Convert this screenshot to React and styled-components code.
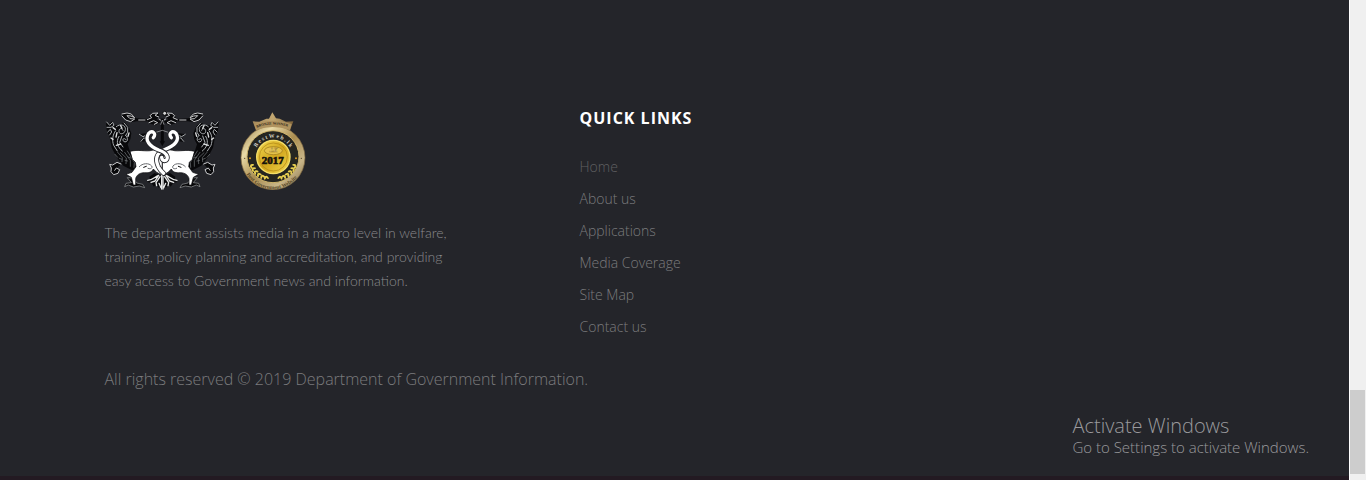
import React from "react";
import styled, { createGlobalStyle } from "styled-components";

const GlobalStyle = createGlobalStyle`
  *, *::before, *::after { box-sizing: border-box; }
  body { margin: 0; background: #24252a; font-family: "Open Sans", sans-serif; }
`;

const Page = styled.div`
  display: flex;
  min-height: 100vh;
`;

const Footer = styled.footer`
  flex: 1;
  position: relative;
  display: flex;
  flex-direction: column;
  padding-top: 106px;
  background: #24252a;
  border-bottom: 4px solid #231a22;
`;

const Container = styled.div`
  width: 100%;
  max-width: 1140px;
  margin: 0 auto;
`;

const Columns = styled.div`
  display: grid;
  grid-template-columns: 5fr 7fr;
`;

const Logos = styled.div`
  display: flex;
  align-items: flex-end;
  gap: 21px;
  padding-top: 4px;
  margin-bottom: 31px;
`;

const Drawing = styled.svg`
  display: block;
  flex: none;
`;

const About = styled.p`
  max-width: 350px;
  margin: 0;
  font: 300 14px/24px Lato, sans-serif;
  color: #8a8a8c;
`;

const Heading = styled.h4`
  margin: 0 0 21px;
  font-size: 16px;
  line-height: 24px;
  font-weight: 700;
  letter-spacing: 1px;
  color: #fff;
`;

const LinkList = styled.ul`
  list-style: none;
  margin: 0;
  padding: 0;
`;

const FooterLink = styled.a`
  display: inline-block;
  font-size: 14px;
  line-height: 32px;
  font-weight: 300;
  vertical-align: top;
  color: ${(p) => (p.$dim ? "#606062" : "#7b7b7d")};
  text-decoration: none;
`;

const LinkItem = styled.li`
  height: 32px;
`;

const Copyright = styled.p`
  margin: 24px 0 0;
  font-size: 16px;
  line-height: 24px;
  font-weight: 300;
  color: #7b7b7d;
`;

const Watermark = styled.aside`
  position: absolute;
  right: 40px;
  bottom: 19px;
  font-weight: 300;
  color: #9a9a9d;
`;

const WatermarkTitle = styled.div`
  font-size: 20px;
  line-height: 22px;
`;

const WatermarkText = styled.div`
  font-size: 15px;
  line-height: 20px;
`;

const ScrollTrack = styled.div`
  display: flex;
  flex-direction: column;
  justify-content: flex-end;
  width: 17px;
  padding: 0 1px 6px 0;
  background: #f0f0f0;
  border-left: 1px solid #fff;
`;

const ScrollThumb = styled.div`
  height: 84px;
  background: #cdcdcd;
`;

function WingAndBeast() {
  return (
    <g strokeLinecap="round" strokeLinejoin="round">
      <path d="M80 43 L96 38 L113 41 L124 55 L160 57 L171 40 L190 38 L195 48 L185 58 L199 65 L183 76 L163 70 L160 64 L126 64 L108 67 L93 61 Z" fill="#08080a" />
      <g fill="none" stroke="#c9cacc" strokeWidth="3">
        <path d="M82 42 L97 39 L110 42 L120 53 L109 48 L97 47 L106 56 L120 57 L108 65 L93 60 L82 48" />
        <path d="M132 60 H151 M158 59 L171 53 L166 47 L174 40 L190 39 L181 46 L192 51 M163 68 L177 62 L189 68 L179 73 M193 57 L202 63" />
      </g>
      <path d="M34 65 L43 72 L52 64 L60 76 L77 75 L88 65 L102 80 L110 100 L107 118 L99 133 L107 158 L127 190 L125 209 L111 210 L86 197 L66 172 L51 143 L45 111 L37 95 L35 82 Z" fill="#08080a" />
      <g fill="none" stroke="#aaaeb1" strokeWidth="3">
        <path d="M36 66 L45 76 L54 67 L58 76 L49 82 L37 82 M39 96 L47 88 L51 96 L45 105" />
        <path d="M65 80 C77 69 94 76 92 89 C91 103 74 105 73 95 C72 85 82 82 85 91 M88 69 L99 82 L99 97 L93 106" />
        <path d="M63 92 C53 105 52 122 57 136 L68 153 M73 109 C62 126 70 143 83 153 M82 108 L75 127 L85 141 M93 106 C105 119 95 130 87 124 C81 117 89 112 94 119" />
        <path d="M55 83 L62 88 M67 98 L64 111 M78 77 L82 85 M103 99 L100 109 M49 114 L55 118 M65 136 L78 132" strokeWidth="4" stroke="#dcdedf" />
        <path d="M61 163 L69 172 M69 157 L83 173 L82 185 M78 158 L95 174 L94 191 M90 157 L107 181 L107 199 M98 153 L119 187 L118 202 M74 175 L82 178 M91 181 L99 183 M100 171 L108 174" stroke="#777b7f" strokeWidth="2" />
      </g>
      <path d="M79 192 L67 187 L54 195 L45 193 L50 204 L49 215 L57 224 L70 220 L75 209 L65 204 L60 211" fill="#08080a" stroke="#c9cacc" strokeWidth="3" />
      <path d="M132 103 L153 100 L162 113 L153 124 L137 126 L144 112 Z" fill="#08080a" />
      <path d="M134 103 L145 110 L158 104 M139 124 L148 113 L155 120" fill="none" stroke="#aaaeb1" strokeWidth="3" />
      <path d="M99 233 L117 234 L126 249 L144 253 L150 263 L134 258 L116 261 L101 255 L90 260 L94 250 L109 248 Z" fill="#08080a" stroke="#9b9ea0" strokeWidth="2" />
      <path d="M107 154 C130 147 154 156 172 151 L202 146 L203 226 L186 217 L176 207 C172 217 161 219 150 218 C134 218 125 226 123 236 L123 255 L116 255 L110 232 L94 223 L112 217 L124 200 L122 187 L114 179 Z" fill="#fff" stroke="#08080a" strokeWidth="2" />
      <path d="M134 200 C143 189 163 188 171 198 C175 204 168 209 160 205" fill="none" stroke="#66686c" strokeWidth="3" />
      <path d="M147 202 L155 199" stroke="#08080a" strokeWidth="3" />
      <path d="M164 230 L180 219 L201 229 L201 256 L192 263 L184 252 L178 260 L170 248 L157 246 L166 240 Z" fill="#08080a" />
      <path d="M159 241 C175 241 181 229 192 226 L181 243 L169 247 M196 230 L184 248 L186 257 M201 222 V267 M193 250 L199 263" fill="none" stroke="#e9eaea" strokeWidth="4" />
    </g>
  );
}

const leftNeck = "M176 113 C187 101 173 89 162 100 C148 121 166 140 192 150 C223 160 223 181 209 182 Q202 181 201 172";
const rightNeck = "M230 113 C219 101 233 89 244 100 C258 121 238 137 212 148 C183 160 181 178 191 200 Q197 212 207 220";

function Emblem() {
  return (
    <Drawing width="114" height="80" viewBox="31 30 342 240" role="img" aria-label="Department emblem">
      <WingAndBeast />
      <g transform="translate(406 0) scale(-1 1)"><WingAndBeast /></g>
      <path d="M203 56 V126" stroke="#08080a" strokeWidth="9" />
      <path d="M198 74 L203 60 L208 74 M184 97 L203 91 L221 97" stroke="#b8babc" strokeWidth="2" fill="none" />
      <path d="M195 124 L203 139 L211 124 Z" fill="#08080a" />
      <circle cx="210" cy="40" r="6" fill="#d9dada" stroke="#08080a" strokeWidth="3" />
      <g fill="none" strokeLinecap="round">
        <path d={rightNeck} stroke="#222327" strokeWidth="15" />
        <path d={rightNeck} stroke="#fff" strokeWidth="10" />
        <path d={leftNeck} stroke="#222327" strokeWidth="15" />
        <path d={leftNeck} stroke="#fff" strokeWidth="10" />
      </g>
    </Drawing>
  );
}

function Laurel() {
  return (
    <g fill="#e8cf51">
      {[[67, 187, 25], [72, 197, 35], [79, 206, 45], [88, 214, 55], [98, 220, 65], [109, 223, 80]].map(([x, y, a]) => (
        <g key={x} transform={`translate(${x} ${y}) rotate(${a})`}>
          <ellipse cx="0" cy="-4" rx="6" ry="3" transform="rotate(-35)" />
          <ellipse cx="0" cy="4" rx="6" ry="3" transform="rotate(35)" />
        </g>
      ))}
    </g>
  );
}

function Seal() {
  return (
    <Drawing width="66" height="78" viewBox="30 24 198 234" role="img" aria-label="Bronze winner 2017">
      <defs>
        <linearGradient id="rim" x1="0" y1="0" x2="1" y2="1">
          <stop offset="0" stopColor="#8a713d" />
          <stop offset="0.25" stopColor="#eadba8" />
          <stop offset="0.5" stopColor="#a98c50" />
          <stop offset="0.75" stopColor="#c8b588" />
          <stop offset="1" stopColor="#79643c" />
        </linearGradient>
        <linearGradient id="gold" x1="0" y1="0" x2="1" y2="1">
          <stop offset="0" stopColor="#f5dc55" />
          <stop offset="0.5" stopColor="#d1a51c" />
          <stop offset="1" stopColor="#f4d951" />
        </linearGradient>
        <linearGradient id="crown" x1="0" y1="0" x2="1" y2="0">
          <stop offset="0" stopColor="#a78a5b" />
          <stop offset="0.5" stopColor="#c2a771" />
          <stop offset="1" stopColor="#7d6239" />
        </linearGradient>
        <path id="ribbonArc" d="M80 71 Q127 53 180 70" />
        <path id="nameArc" d="M73 158 A57 57 0 0 1 187 158" />
        <path id="siteArc" d="M50 211 A92 92 0 0 0 211 205" />
      </defs>
      <path d="M68 52 L88 53 L109 44 L117 44 L127 25 L138 43 L149 44 L168 53 L190 52 L179 82 H79 Z" fill="url(#crown)" />
      <circle cx="129" cy="161" r="96" fill="url(#rim)" stroke="#806840" strokeWidth="2" />
      <circle cx="129" cy="158" r="78" fill="#252520" stroke="#cfb46a" strokeWidth="3" />
      <path d="M73 60 Q127 40 185 60 L180 78 Q127 60 79 78 Z" fill="#b0935f" />
      <circle cx="130" cy="159" r="50" fill="url(#gold)" stroke="#f4de68" strokeWidth="4" />
      <circle cx="130" cy="159" r="42" fill="none" stroke="#ad8413" strokeWidth="2" />
      <Laurel />
      <g transform="translate(259 0) scale(-1 1)"><Laurel /></g>
      <g fontFamily="Liberation Serif, serif" fontWeight="700">
        <text fontSize="11" fill="#2c2417"><textPath href="#ribbonArc">BRONZE WINNER</textPath></text>
        <text fontSize="17" fill="#d9d6c9" textAnchor="middle"><textPath href="#nameArc" startOffset="50%">{"B\u00a0e\u00a0s\u00a0t\u00a0W\u00a0e\u00a0b\u00a0.\u00a0l\u00a0k"}</textPath></text>
        <text fontSize="16" fill="#564526"><textPath href="#siteArc">Best Government Website</textPath></text>
        <ellipse cx="130" cy="140" rx="27" ry="12" fill="#e5c24a" stroke="#98751b" strokeWidth="2" />
        <text x="130" y="145" textAnchor="middle" fontSize="16" fontStyle="italic" fill="#fff2b1" stroke="#94721a" strokeWidth="1">.LK</text>
        <text x="128" y="180" textAnchor="middle" fontSize="33" fill="#17140b" stroke="#17140b" strokeWidth="2">2017</text>
      </g>
      <circle cx="60" cy="163" r="3" fill="#d79b29" />
      <circle cx="198" cy="163" r="3" fill="#d79b29" />
      <circle cx="44" cy="163" r="2" fill="#54442a" />
      <circle cx="214" cy="163" r="2" fill="#54442a" />
    </Drawing>
  );
}

const links = ["Home", "About us", "Applications", "Media Coverage", "Site Map", "Contact us"];

export default function App() {
  return (
    <Page>
      <GlobalStyle />
      <Footer>
        <Container>
          <Columns>
            <section>
              <Logos>
                <Emblem />
                <Seal />
              </Logos>
              <About>
                The department assists media in a macro level in welfare, training, policy planning and
                accreditation, and providing easy access to Government news and information.
              </About>
            </section>
            <nav aria-labelledby="quick-links">
              <Heading id="quick-links">QUICK LINKS</Heading>
              <LinkList>
                {links.map((label) => (
                  <LinkItem key={label}>
                    <FooterLink href="#" $dim={label === "Home"}>{label}</FooterLink>
                  </LinkItem>
                ))}
              </LinkList>
            </nav>
          </Columns>
          <Copyright>All rights reserved © 2019 Department of Government Information.</Copyright>
        </Container>
        <Watermark>
          <WatermarkTitle>Activate Windows</WatermarkTitle>
          <WatermarkText>Go to Settings to activate Windows.</WatermarkText>
        </Watermark>
      </Footer>
      <ScrollTrack>
        <ScrollThumb />
      </ScrollTrack>
    </Page>
  );
}
